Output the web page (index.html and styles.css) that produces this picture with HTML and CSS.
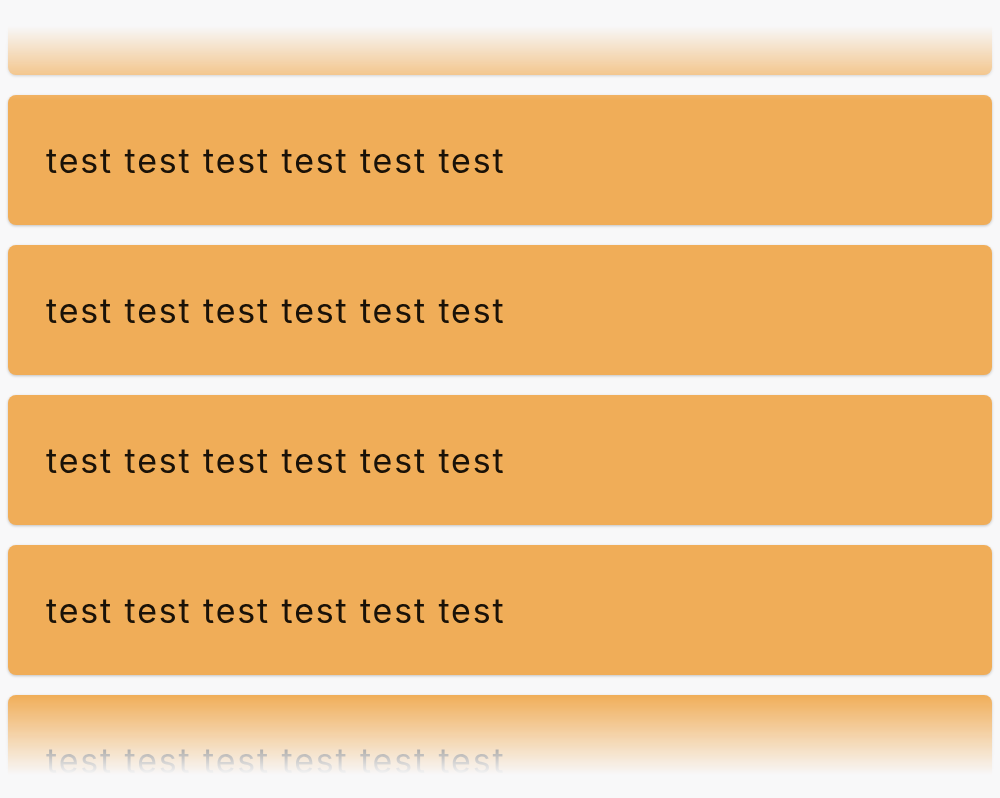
FILE: index.html
```html
<!DOCTYPE html>
<html lang="en">
<head>
    <meta charset="UTF-8">
    <meta name="viewport" content="width=device-width, initial-scale=1.0">
    <title>List</title>
    <link rel="stylesheet" href="styles.css">
</head>
<body>
    <div class="viewport">
        <ul class="card-list">
            <li class="card">test test test test test test</li>
            <li class="card">test test test test test test</li>
            <li class="card">test test test test test test</li>
            <li class="card">test test test test test test</li>
            <li class="card">test test test test test test</li>
            <li class="card">test test test test test test</li>
        </ul>
    </div>
</body>
</html>
```

FILE: styles.css
```css
:root {
    --bg: #f8f8f9;
    --card: #f0ad58;
    --text-dark: #1a1208;
}

* {
    margin: 0;
    padding: 0;
    box-sizing: border-box;
}

body {
    font-family: Inter, 'Noto Sans', sans-serif;
    background-color: var(--bg);
    color: var(--text-dark);
}

.viewport {
    height: 798px;
    overflow: hidden;
    -webkit-mask-image: linear-gradient(to bottom, transparent 26px, #000 100px, #000 695px, transparent 775px);
    mask-image: linear-gradient(to bottom, transparent 26px, #000 100px, #000 695px, transparent 775px);
}

.card-list {
    list-style: none;
    display: flex;
    flex-direction: column;
    gap: 20px;
    padding: 0 8px;
    margin-top: -55px;
}

.card {
    height: 130px;
    display: flex;
    align-items: center;
    padding-left: 38px;
    background: var(--card);
    border-radius: 8px;
    box-shadow: 0 1px 3px rgba(0, 0, 0, 0.22);
    font-size: 34px;
    letter-spacing: 1.85px;
}
```
